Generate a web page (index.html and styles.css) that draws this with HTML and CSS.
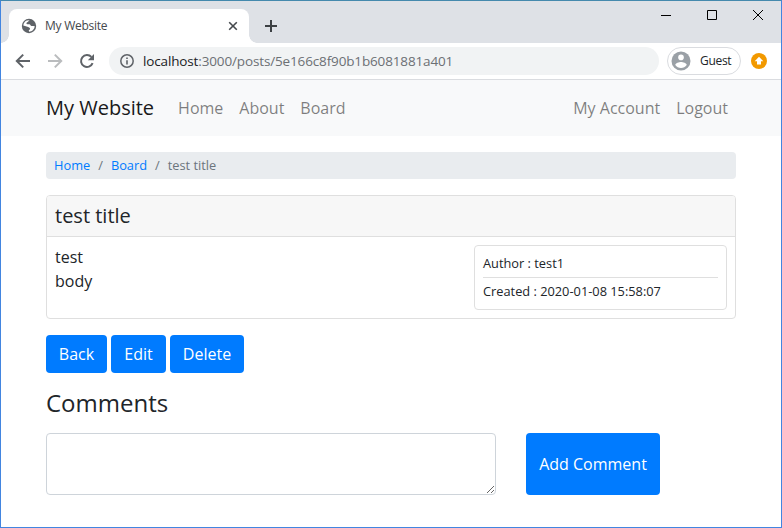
FILE: index.html
```html
<!DOCTYPE html>
<html lang="en">
<head>
<meta charset="utf-8">
<title>My Website</title>
<link rel="stylesheet" href="styles.css">
</head>
<body>
<div class="window">
  <div class="tabstrip">
    <div class="tab">
      <svg class="favicon" width="16" height="16" viewBox="0 0 16 16"><circle cx="8" cy="8" r="7.2" fill="#5f6368"/><path d="M8.7 2.2C7.4 2.8 7.6 3.8 6.3 4.2 5 4.5 5.2 6.1 6.5 6.3c1.5.1 2.5-.2 2.9.8.4 1.1 1.5 1 2.800.8l1.600.3c-.2 1.400-.8 2.700-1.800 3.700-1 1-2.500 1.700-4 1.800l-.2-1.600c1.300-.4 1.600-1.200.9-2-.7-.8-1.400-1-2.300-1.300L2.300 7.400C2.500 5.200 3.800 3.300 5.800 2.500z" fill="#fff"/><path d="M2.200 8.200 5.900 9.600c1 .4 1.200 1.200.4 1.800l-.4 2C3.800 12.600 2.400 10.600 2.200 8.200zM9.500 2.200c2.400.6 4 2.500 4.300 4.800l-2.400.2c-.8-.5-.6-1.600-1.600-1.800-1.400-.2-1.300-1.600-.3-1.900z" fill="#5f6368"/></svg>
      <span class="tab-title">My Website</span>
      <svg class="tab-close" width="10" height="10" viewBox="0 0 10 10"><path d="M1.200 1.200l7.600 7.600M8.800 1.200L1.200 8.800" stroke="#45494d" stroke-width="1.6"/></svg>
    </div>
    <svg class="new-tab" width="12" height="12" viewBox="0 0 12 12"><path d="M6 0v12M0 6h12" stroke="#3c4043" stroke-width="2"/></svg>
    <div class="window-controls">
      <svg width="10" height="10" viewBox="0 0 10 10"><path d="M0 5.500h10" stroke="#000"/></svg>
      <svg width="10" height="10" viewBox="0 0 10 10"><path d="M.5.5h9v9h-9z" stroke="#000" fill="none"/></svg>
      <svg width="10" height="10" viewBox="0 0 10 10"><path d="M0 0l10 10M10 0L0 10" stroke="#000"/></svg>
    </div>
  </div>
  <div class="toolbar">
    <div class="nav-icons">
      <svg width="16" height="16" viewBox="0 0 16 16"><path d="M15 8H2M8.200 1.600L1.800 8l6.400 6.400" fill="none" stroke="#5f6368" stroke-width="2"/></svg>
      <svg width="16" height="16" viewBox="0 0 16 16"><path d="M1 8h13M7.800 1.600L14.200 8l-6.400 6.400" fill="none" stroke="#babcbe" stroke-width="2"/></svg>
      <svg width="16" height="16" viewBox="0 0 16 16"><path d="M13.600 10.200A6 6 0 1 1 12.400 3.900" fill="none" stroke="#5f6368" stroke-width="2"/><path d="M15 1v6.200H8.800z" fill="#5f6368"/></svg>
    </div>
    <div class="omnibox">
      <svg width="14" height="14" viewBox="0 0 14 14"><circle cx="7" cy="7" r="6.200" fill="none" stroke="#5f6368" stroke-width="1.500"/><path d="M7 6.200v4.300M7 3.400V5" stroke="#5f6368" stroke-width="1.600"/></svg>
      <span class="url"><span class="host">localhost</span>:3000/posts/5e166c8f90b1b6081881a401</span>
    </div>
    <div class="profile">
      <svg width="20" height="20" viewBox="0 0 20 20"><circle cx="10" cy="10" r="9.500" fill="#9aa0a6"/><circle cx="10" cy="6.400" r="2.800" fill="#fff"/><path d="M4.300 13.900c0-2 3.800-3 5.700-3s5.700 1 5.700 3c-1.300 1.900-3.400 3-5.700 3s-4.400-1.100-5.700-3z" fill="#fff"/></svg>
      <span>Guest</span>
    </div>
    <svg class="update" width="16" height="16" viewBox="0 0 16 16"><circle cx="8" cy="8" r="8" fill="#f29900"/><path d="M8 3.800l4.300 4.400H10v3.400H6V8.200H3.700z" fill="#fff"/></svg>
  </div>
  <nav class="navbar">
    <div class="container navbar-row">
      <a class="brand">My Website</a>
      <a class="nav-link">Home</a>
      <a class="nav-link">About</a>
      <a class="nav-link">Board</a>
      <a class="nav-link push">My Account</a>
      <a class="nav-link">Logout</a>
    </div>
  </nav>
  <main class="container">
    <div class="breadcrumb"><a>Home</a><i>/</i><a>Board</a><i>/</i><span>test title</span></div>
    <section class="card">
      <h5 class="card-title">test title</h5>
      <div class="card-content">
        <div class="post-body">test<br>body</div>
        <div class="post-info">
          <div class="author">Author : test1</div>
          <div class="created">Created : 2020-01-08 15:58:07</div>
        </div>
      </div>
    </section>
    <div class="actions">
      <a class="btn back">Back</a>
      <a class="btn edit">Edit</a>
      <a class="btn delete">Delete</a>
    </div>
    <h4 class="comments-title">Comments</h4>
    <form class="comment-form">
      <textarea rows="2"></textarea>
      <button type="button" class="btn add">Add Comment</button>
    </form>
  </main>
</div>
</body>
</html>
```
FILE: styles.css
```css
* { box-sizing: border-box; }
body { margin: 0; font-family: "Open Sans", sans-serif; font-size: 16px; line-height: 24px; color: #212529; background: #fff; }
svg { display: block; flex: none; }
h4, h5 { margin: 0; font-weight: 400; }
.window { height: 528px; border: 1px solid #4285e0; border-top-color: #4489ad; overflow: hidden; }

.tabstrip { height: 42px; padding: 8px 0 0 8px; background: #dee1e6; display: flex; align-items: flex-start; }
.tab { position: relative; width: 240px; height: 34px; padding: 0 11px 0 12px; background: #fff; border-radius: 8px 8px 0 0; display: flex; align-items: center; }
.tab::before, .tab::after { content: ""; position: absolute; bottom: 0; width: 8px; height: 8px; }
.tab::before { left: -8px; background: radial-gradient(circle at 0 0, #dee1e6 7.5px, #fff 8px); }
.tab::after { right: -8px; background: radial-gradient(circle at 100% 0, #dee1e6 7.5px, #fff 8px); }
.tab-title { margin-left: 8px; font-size: 12px; line-height: 16px; color: #45494d; letter-spacing: -.25px; }
.tab-close { margin-left: auto; }
.new-tab { margin: 11px 0 0 16px; }
.window-controls { display: flex; gap: 36px; margin: 1px 18px 0 auto; }

.toolbar { height: 37px; border-bottom: 1px solid #dadce0; display: flex; align-items: center; }
.nav-icons { display: flex; gap: 16px; width: 108px; padding-left: 14px; }
.omnibox { width: 550px; height: 28px; border-radius: 14px; background: #f1f3f4; padding-left: 11px; display: flex; align-items: center; gap: 9px; }
.url { font-size: 13.5px; line-height: 20px; color: #6c7074; letter-spacing: -.14px; }
.host { color: #202124; }
.profile { margin-left: 8px; width: 74px; height: 28px; border: 1px solid #dadce0; border-radius: 14px; padding-left: 3px; display: flex; align-items: center; gap: 9px; font-size: 12px; letter-spacing: -.3px; }
.update { margin-left: 10px; }

.container { width: 720px; margin: 0 auto; padding: 0 15px; }
.navbar { height: 56px; background: #f8f9fa; }
.navbar-row { height: 56px; display: flex; align-items: center; }
.brand { font-size: 20px; line-height: 30px; margin-right: 16px; color: #1a1a1a; }
.nav-link { padding: 0 8px; color: rgba(0, 0, 0, .5); }
.push { margin-left: auto; }

.breadcrumb { height: 27px; margin-top: 16px; padding: 4px 8px; border-radius: 4px; background: #e9ecef; display: flex; font-size: 12.8px; line-height: 19px; color: #6c757d; }
.breadcrumb a { color: #007bff; }
.breadcrumb i { font-style: normal; padding: 0 8px; }
.card { margin-top: 16px; height: 124px; border: 1px solid #dfdfdf; border-radius: 4px; overflow: hidden; }
.card-title { height: 41px; padding: 8px; font-size: 20px; line-height: 24px; background: #f7f7f7; border-bottom: 1px solid #dfdfdf; }
.card-content { padding: 8px; display: flex; justify-content: space-between; }
.post-info { width: 253px; height: 65px; border: 1px solid #dfdfdf; border-radius: 4px; padding: 8px; font-size: 12.8px; line-height: 19px; }
.author { height: 24px; border-bottom: 1px solid #dfdfdf; }
.created { padding-top: 4px; }

.actions { margin-top: 16px; display: flex; gap: 4px; }
.btn { display: block; height: 38px; border: 0; border-radius: 4px; background: #007bff; color: #fff; font: 400 16px/38px "Open Sans", sans-serif; text-align: center; padding: 0; white-space: nowrap; }
.back { width: 61px; }
.edit { width: 55px; }
.delete { width: 74px; }
.comments-title { margin-top: 15px; font-size: 24px; line-height: 29px; }
.comment-form { margin-top: 16px; display: flex; gap: 30px; }
textarea { width: 450px; height: 62px; margin: 0; border: 1px solid #ced4da; border-radius: 4px; background: #fff; resize: vertical; }
.add { width: 134px; height: 62px; line-height: 62px; }
```
